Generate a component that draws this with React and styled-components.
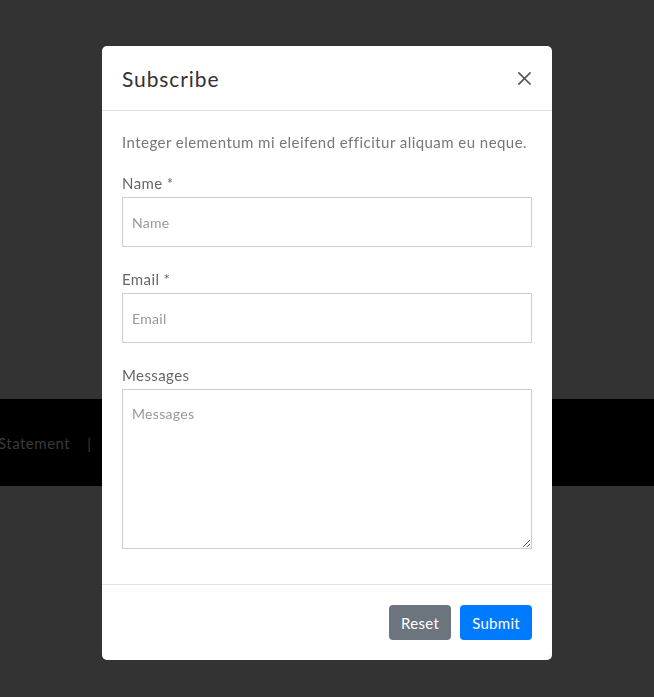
import React from 'react'
import styled, { createGlobalStyle } from 'styled-components'

const GlobalStyle = createGlobalStyle`
   html, body {
      margin: 0;
      padding: 0;
      background: #333333;
      font-family: "Lato", "Open Sans", sans-serif;
   }
   * { box-sizing: border-box; }
`

const Page = styled.div`
   height: 697px;
   display: flex;
   flex-direction: column;
   overflow: hidden;
`

const Spacer = styled.div`
   height: 399px;
`

const FooterBand = styled.div`
   height: 87px;
   background: #000;
   display: flex;
   align-items: center;
   gap: 17px;
   margin-left: -2px;
   color: #3a3a3a;
   font-size: 15px;
   letter-spacing: 0.5px;
`

const Overlay = styled.div`
   position: fixed;
   inset: 0;
   display: flex;
   justify-content: center;
   align-items: flex-start;
   padding-top: 46px;
`

const Modal = styled.div`
   width: 450px;
   background: #fff;
   border-radius: 5px;
   display: flex;
   flex-direction: column;
`

const Header = styled.div`
   height: 65px;
   padding: 0 20px;
   display: flex;
   align-items: center;
   justify-content: space-between;
   border-bottom: 1px solid #e3e3e3;
`

const Title = styled.h5`
   margin: 0;
   font-size: 21px;
   font-weight: 400;
   color: #333;
   letter-spacing: 0.9px;
   padding-top: 1px;
`

const CloseButton = styled.button`
   border: 0;
   background: none;
   padding: 0;
   width: 20px;
   height: 20px;
   display: flex;
   align-items: center;
   justify-content: center;
   cursor: pointer;
   margin-right: -2px;
`

const Body = styled.div`
   padding: 20px 20px 35px;
   display: flex;
   flex-direction: column;
`

const Intro = styled.p`
   margin: 0 0 19px;
   font-size: 15px;
   line-height: 22px;
   color: #777;
   letter-spacing: 0.45px;
`

const Group = styled.div`
   display: flex;
   flex-direction: column;
   margin-bottom: ${p => (p.$last ? 0 : 21)}px;
`

const Label = styled.label`
   font-size: 15px;
   line-height: 22px;
   color: #666;
   margin-bottom: 3px;
   letter-spacing: 0.4px;
`

const fieldStyle = `
   width: 100%;
   border: 1px solid #cfcfcf;
   border-radius: 0;
   font-family: "Lato", "Open Sans", sans-serif;
   font-size: 14px;
   color: #555;
   padding: 0 9px;
   outline: none;
   letter-spacing: 0.3px;
   &::placeholder { color: #999; }
`

const Input = styled.input`
   ${fieldStyle}
   height: 50px;
`

const TextArea = styled.textarea`
   ${fieldStyle}
   height: 160px;
   padding-top: 15px;
   resize: vertical;
   line-height: 18px;
`

const Footer = styled.div`
   border-top: 1px solid #e3e3e3;
   padding: 20px;
   display: flex;
   justify-content: flex-end;
   gap: 9px;
`

const Button = styled.button`
   height: 35px;
   padding: 0 ${p => (p.$wide ? 12 : 12)}px;
   border: 0;
   border-radius: 4px;
   background: ${p => (p.$primary ? '#007bff' : '#6c757d')};
   color: #fff;
   font-family: "Lato", "Open Sans", sans-serif;
   font-size: 15px;
   letter-spacing: 0.3px;
   cursor: pointer;
`

function CloseIcon() {
   return (
      <svg width="13" height="13" viewBox="0 0 13 13">
         <path d="M1 1 L12 12 M12 1 L1 12" stroke="#555" strokeWidth="1.7" strokeLinecap="square" />
      </svg>
   )
}

function App() {
   return (
      <>
         <GlobalStyle />
         <Page>
            <Spacer />
            <FooterBand>
               <span>Statement</span>
               <span>|</span>
            </FooterBand>
         </Page>
         <Overlay>
            <Modal>
               <Header>
                  <Title>Subscribe</Title>
                  <CloseButton aria-label="Close"><CloseIcon /></CloseButton>
               </Header>
               <Body>
                  <Intro>Integer elementum mi eleifend efficitur aliquam eu neque.</Intro>
                  <Group>
                     <Label>Name *</Label>
                     <Input placeholder="Name" />
                  </Group>
                  <Group>
                     <Label>Email *</Label>
                     <Input placeholder="Email" />
                  </Group>
                  <Group $last>
                     <Label>Messages</Label>
                     <TextArea placeholder="Messages" />
                  </Group>
               </Body>
               <Footer>
                  <Button>Reset</Button>
                  <Button $primary>Submit</Button>
               </Footer>
            </Modal>
         </Overlay>
      </>
   )
}

export default App
